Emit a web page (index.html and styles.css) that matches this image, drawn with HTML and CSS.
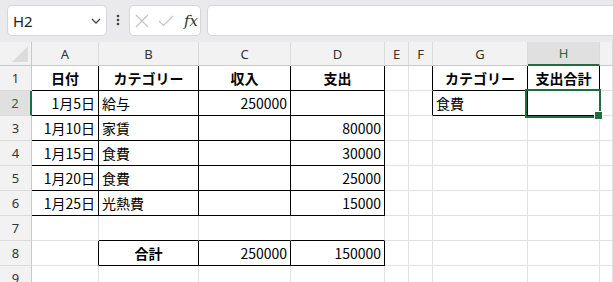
FILE: index.html
```html
<!DOCTYPE html>
<html lang="ja">

<head>
    <meta charset="UTF-8">
    <meta name="viewport" content="width=device-width, initial-scale=1.0">
    <title>家計簿</title>
    <link rel="stylesheet" href="styles.css">
</head>

<body>
    <!-- Formula bar -->
    <div class="toolbar">
        <div class="name-box">
            <span>H2</span>
            <svg class="chevron" width="10" height="6" viewBox="0 0 10 6">
                <path d="M1 1 L5 5 L9 1" fill="none" stroke="#444" stroke-width="1.3"/>
            </svg>
        </div>
        <div class="dots">
            <svg width="4" height="12" viewBox="0 0 4 12">
                <circle cx="2" cy="2" r="1.3" fill="#444"/>
                <circle cx="2" cy="6" r="1.3" fill="#444"/>
                <circle cx="2" cy="10" r="1.3" fill="#444"/>
            </svg>
        </div>
        <div class="fx-box">
            <svg width="14" height="14" viewBox="0 0 14 14">
                <path d="M1 1 L13 13 M13 1 L1 13" stroke="#c4c4c4" stroke-width="1.2" fill="none"/>
            </svg>
            <svg width="16" height="12" viewBox="0 0 16 12">
                <path d="M1 6 L5.5 10.5 L15 1" stroke="#c4c4c4" stroke-width="1.2" fill="none"/>
            </svg>
            <span class="fx">fx</span>
        </div>
        <div class="formula"></div>
    </div>

    <!-- Sheet -->
    <div class="sheet">
        <div class="corner"><div class="tri"></div></div>
        <div class="ch">A</div>
        <div class="ch">B</div>
        <div class="ch">C</div>
        <div class="ch">D</div>
        <div class="ch">E</div>
        <div class="ch">F</div>
        <div class="ch">G</div>
        <div class="ch sel">H</div>
        <div class="ch"></div>

        <!-- 1 -->
        <div class="rh">1</div>
        <div class="c r b ctr">日付</div>
        <div class="c r b ctr">カテゴリー</div>
        <div class="c r b ctr">収入</div>
        <div class="c r b ctr">支出</div>
        <div class="c"></div>
        <div class="c r"></div>
        <div class="c r b ctr">カテゴリー</div>
        <div class="c r b ctr">支出合計</div>
        <div class="c"></div>

        <!-- 2 -->
        <div class="rh sel">2</div>
        <div class="c r b num">1月5日</div>
        <div class="c r b">給与</div>
        <div class="c r b num">250000</div>
        <div class="c r b"></div>
        <div class="c"></div>
        <div class="c r"></div>
        <div class="c r b">食費</div>
        <div class="c r b active"></div>
        <div class="c"></div>

        <!-- 3 -->
        <div class="rh">3</div>
        <div class="c r b num">1月10日</div>
        <div class="c r b">家賃</div>
        <div class="c r b"></div>
        <div class="c r b num">80000</div>
        <div class="c"></div>
        <div class="c"></div>
        <div class="c"></div>
        <div class="c"></div>
        <div class="c"></div>

        <!-- 4 -->
        <div class="rh">4</div>
        <div class="c r b num">1月15日</div>
        <div class="c r b">食費</div>
        <div class="c r b"></div>
        <div class="c r b num">30000</div>
        <div class="c"></div>
        <div class="c"></div>
        <div class="c"></div>
        <div class="c"></div>
        <div class="c"></div>

        <!-- 5 -->
        <div class="rh">5</div>
        <div class="c r b num">1月20日</div>
        <div class="c r b">食費</div>
        <div class="c r b"></div>
        <div class="c r b num">25000</div>
        <div class="c"></div>
        <div class="c"></div>
        <div class="c"></div>
        <div class="c"></div>
        <div class="c"></div>

        <!-- 6 -->
        <div class="rh">6</div>
        <div class="c r b num">1月25日</div>
        <div class="c r b">光熱費</div>
        <div class="c r b"></div>
        <div class="c r b num">15000</div>
        <div class="c"></div>
        <div class="c"></div>
        <div class="c"></div>
        <div class="c"></div>
        <div class="c"></div>

        <!-- 7 -->
        <div class="rh">7</div>
        <div class="c"></div>
        <div class="c b"></div>
        <div class="c b"></div>
        <div class="c b"></div>
        <div class="c"></div>
        <div class="c"></div>
        <div class="c"></div>
        <div class="c"></div>
        <div class="c"></div>

        <!-- 8 -->
        <div class="rh">8</div>
        <div class="c r"></div>
        <div class="c r b ctr">合計</div>
        <div class="c r b num">250000</div>
        <div class="c r b num">150000</div>
        <div class="c"></div>
        <div class="c"></div>
        <div class="c"></div>
        <div class="c"></div>
        <div class="c"></div>

        <!-- 9 -->
        <div class="rh">9</div>
        <div class="c"></div>
        <div class="c"></div>
        <div class="c"></div>
        <div class="c"></div>
        <div class="c"></div>
        <div class="c"></div>
        <div class="c"></div>
        <div class="c"></div>
        <div class="c"></div>
    </div>
</body>

</html>
```

FILE: styles.css
```css
/* Base */
* {
    margin: 0;
    padding: 0;
    box-sizing: border-box;
}

body {
    font-family: "Noto Sans CJK JP", "Noto Sans", sans-serif;
    background: #fff;
    color: #000;
    overflow: hidden;
}

/* Formula bar */
.toolbar {
    display: flex;
    align-items: flex-start;
    height: 42px;
    padding: 5px 0 0 7px;
    background: #eaeaec;
}

.name-box {
    display: flex;
    align-items: center;
    justify-content: space-between;
    width: 100px;
    height: 31px;
    padding: 0 5px 0 5px;
    background: #fff;
    border: 1px solid #d6d6d6;
    border-radius: 5px;
    font-family: "Noto Sans", sans-serif;
    font-size: 15px;
    color: #222;
}

.dots {
    display: flex;
    justify-content: center;
    width: 22px;
    padding-top: 9px;
}

.fx-box {
    display: flex;
    align-items: center;
    gap: 9px;
    width: 72px;
    height: 31px;
    padding-left: 5px;
    background: #fff;
    border: 1px solid #d6d6d6;
    border-radius: 5px;
}

.fx {
    font-family: "DejaVu Serif", "Liberation Serif", serif;
    font-style: italic;
    font-size: 15px;
    color: #333;
    margin-left: 1px;
}

.formula {
    flex: 1;
    height: 31px;
    margin-left: 6px;
    margin-right: -10px;
    background: #fff;
    border: 1px solid #d6d6d6;
    border-radius: 5px;
}

/* Sheet grid */
.sheet {
    display: grid;
    grid-template-columns: 32px 67px 100px 92px 94px 24px 24px 95px 72px 1fr;
    grid-template-rows: 24px repeat(9, 25px);
}

.corner {
    position: relative;
    background: #f2f2f2;
    border-right: 1px solid #c8c8c8;
    border-bottom: 1px solid #c8c8c8;
}

.corner .tri {
    position: absolute;
    right: 3px;
    bottom: 3px;
    width: 0;
    height: 0;
    border-left: 16px solid transparent;
    border-bottom: 16px solid #dcdcdc;
}

.ch {
    display: flex;
    align-items: center;
    justify-content: center;
    background: #f2f2f2;
    border-right: 1px solid #dadada;
    border-bottom: 1px solid #c8c8c8;
    font-family: "Noto Sans", sans-serif;
    font-size: 13px;
    color: #333;
}

.ch.sel {
    background: #e0e0e0;
    color: #1e6c41;
    border-bottom: 2px solid #1e6c41;
}

.rh {
    display: flex;
    align-items: center;
    justify-content: center;
    background: #f2f2f2;
    border-right: 1px solid #c8c8c8;
    border-bottom: 1px solid #dadada;
    font-family: "Noto Sans", sans-serif;
    font-size: 13px;
    color: #333;
}

.rh.sel {
    background: #e0e0e0;
    color: #1e6c41;
    border-right: 2px solid #1e6c41;
}

.c {
    display: flex;
    align-items: center;
    padding: 0 3px 1px;
    border-right: 1px solid #e1e1e1;
    border-bottom: 1px solid #e1e1e1;
    font-size: 14px;
    white-space: nowrap;
}

.c.r {
    border-right-color: #000;
}

.c.b {
    border-bottom-color: #000;
}

.num {
    justify-content: flex-end;
}

.ctr {
    justify-content: center;
    font-weight: bold;
}

/* Active cell H2 */
.active {
    position: relative;
}

.active::after {
    content: "";
    position: absolute;
    top: -2px;
    left: -3px;
    right: -2px;
    bottom: -3px;
    border: 2px solid #1e6c41;
}

.active::before {
    content: "";
    position: absolute;
    right: -4px;
    bottom: -5px;
    width: 7px;
    height: 7px;
    background: #1e6c41;
    border: 1px solid #fff;
    z-index: 1;
}
```
